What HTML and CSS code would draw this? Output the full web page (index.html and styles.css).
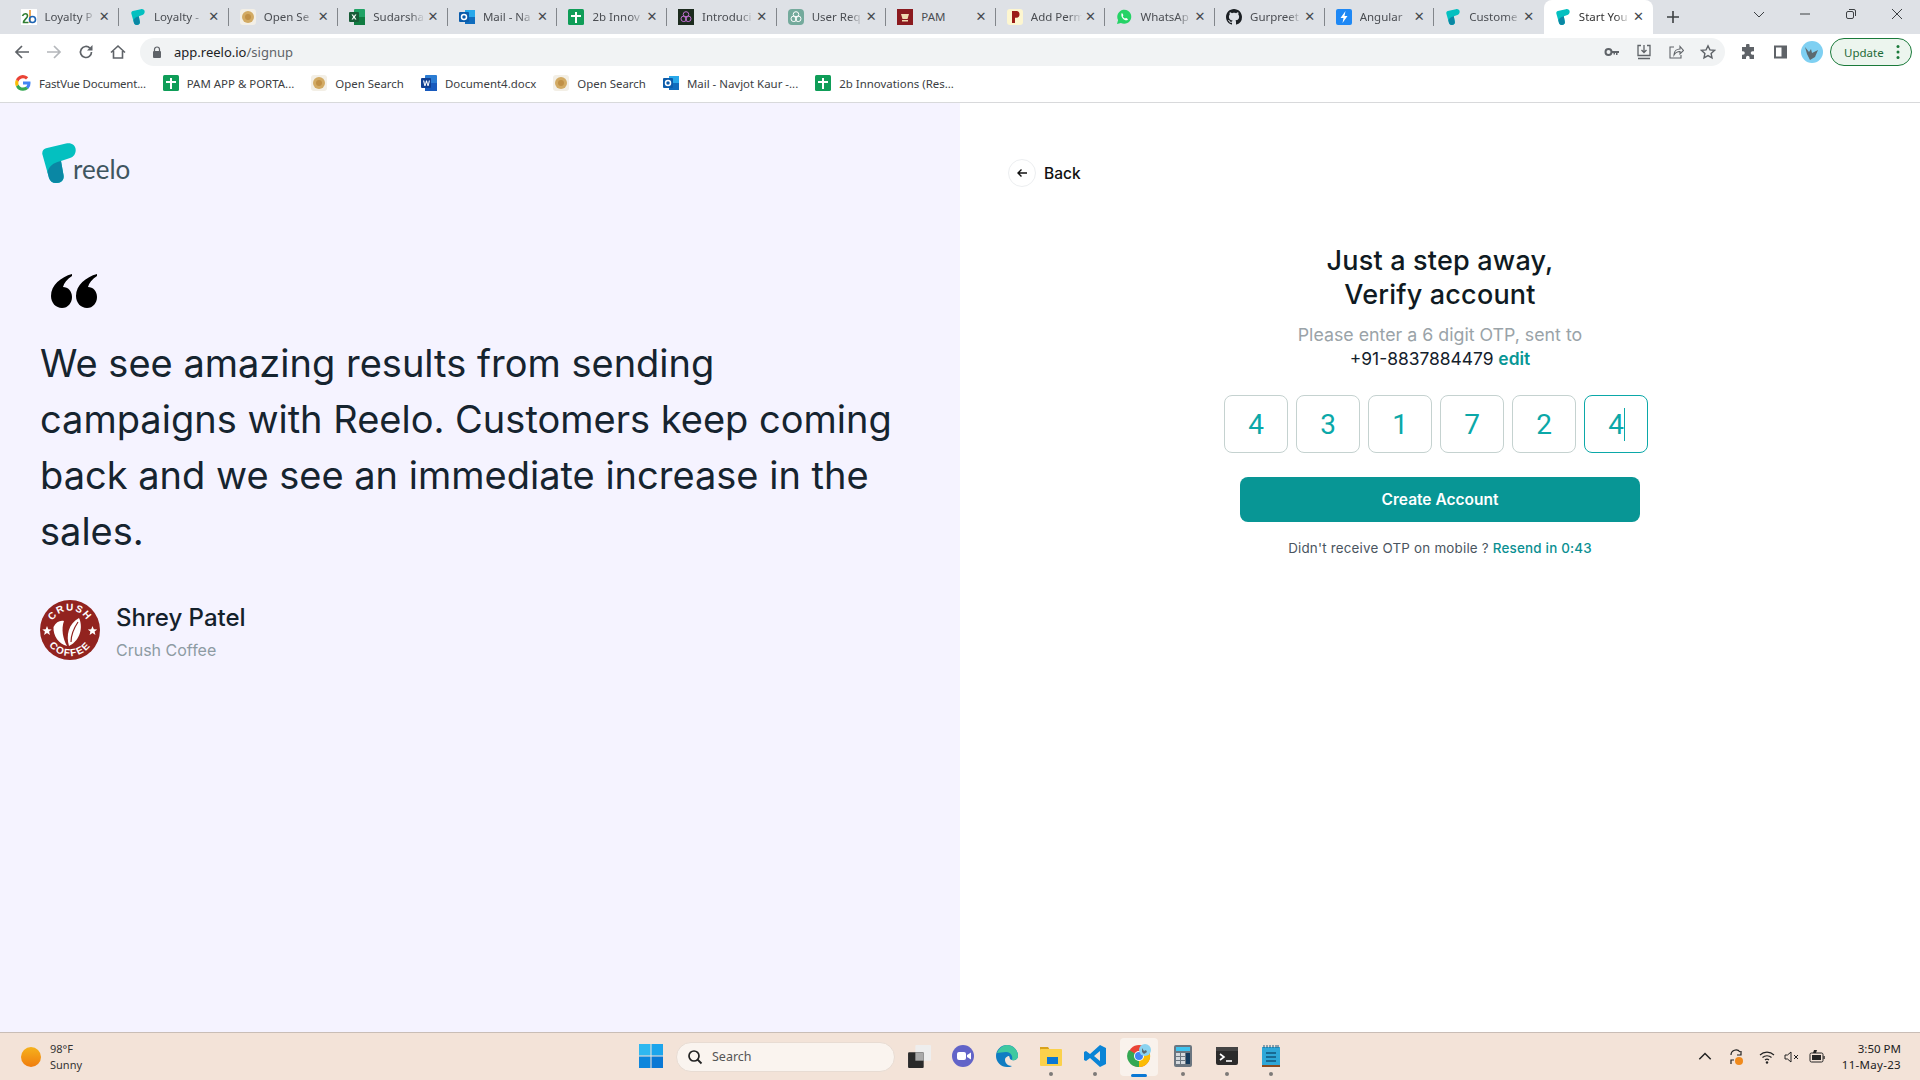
FILE: index.html
```html
<!DOCTYPE html>
<html lang="en">
<head>
<meta charset="utf-8">
<title>Start Your Free Trial</title>
<link rel="stylesheet" href="styles.css">
</head>
<body>
<svg class="defs" width="0" height="0">
  <defs>
    <symbol id="reelo" viewBox="0 0 34 40">
      <path d="M.3 11C0 8 1.500 6 4 5.200L24 .6C29-.6 33.700 2 33.700 7c0 4-2.200 7-5.700 8l-9 3 2.500 14c1 5-2.500 8-7.500 8-3.500 0-6-2-7-5z" fill="#04c0c0"/>
      <path d="M5.500 29c1-5 5.500-9.500 13.500-11l2.500 14c1 5-2.500 8-7.500 8-3.500 0-6-2-7-5z" fill="#0a87a4"/>
    </symbol>
    <symbol id="sheets" viewBox="0 0 16 16"><rect width="16" height="16" rx="1.500" fill="#0f9d58"/><path d="M7 3h2v3h4v2H9v6H7V8H3V6h4z" fill="#fff"/></symbol>
    <symbol id="coin" viewBox="0 0 16 16"><rect width="16" height="16" rx="3" fill="#f3efe6"/><circle cx="8" cy="8" r="6" fill="#d2aa63"/><circle cx="8" cy="8" r="3" fill="#c09046"/></symbol>
    <symbol id="outlook" viewBox="0 0 16 16"><rect x="6" y="1" width="10" height="14" fill="#28a8ea"/><rect x="6" y="8" width="10" height="7" fill="#0f6cbd"/><rect y="3" width="10" height="10" rx="1" fill="#0b5cab"/><circle cx="5" cy="8" r="2.500" fill="none" stroke="#fff" stroke-width="1.500"/></symbol>
    <symbol id="word" viewBox="0 0 16 16"><rect x="4" y="0" width="12" height="16" rx="1" fill="#2b7cd3"/><rect x="4" y="8" width="12" height="8" fill="#185abd"/><rect y="3" width="10" height="10" rx="1" fill="#103f91"/><path d="M2 5.500h1.200L4 9.500l1-4h1l1 4 .8-4H9L7.600 11H6.500L5.500 7.500 4.500 11H3.400z" fill="#fff"/></symbol>
    <symbol id="gpt" viewBox="0 0 16 16"><circle cx="8" cy="5.500" r="2.800" fill="none" stroke="currentColor"/><circle cx="5.800" cy="9.800" r="2.800" fill="none" stroke="currentColor"/><circle cx="10.200" cy="9.800" r="2.800" fill="none" stroke="currentColor"/></symbol>
  </defs>
</svg>

<div class="screen">
  <header class="tabstrip">
    <div class="tabs">
      <div class="tab"><svg class="fav" viewBox="0 0 16 16"><rect width="16" height="16" fill="#fff"/><path d="M1.500 7c1-3 5-3 5 0 0 2-4 4-4 6.500h5" fill="none" stroke="#2f7d32" stroke-width="1.600"/><path d="M9 1v13" stroke="#e8912d" stroke-width="1.600"/><circle cx="11.500" cy="10.500" r="3" fill="none" stroke="#1b64b5" stroke-width="1.600"/></svg><span class="tab-title">Loyalty P</span><span class="tab-close">✕</span></div>
      <div class="tab"><svg class="fav"><use href="#reelo"/></svg><span class="tab-title">Loyalty -</span><span class="tab-close">✕</span></div>
      <div class="tab"><svg class="fav"><use href="#coin"/></svg><span class="tab-title">Open Se</span><span class="tab-close">✕</span></div>
      <div class="tab"><svg class="fav" viewBox="0 0 16 16"><rect x="5" y="0" width="11" height="16" rx="1" fill="#21a366"/><rect x="5" y="8" width="11" height="8" fill="#107c41"/><rect y="3" width="10" height="10" rx="1" fill="#185c37"/><path d="M2.500 5.500h1.500l1 1.700 1-1.700h1.500L5.800 8l1.700 2.500H6L5 8.800 4 10.500H2.500L4.200 8z" fill="#fff"/></svg><span class="tab-title">Sudarsha</span><span class="tab-close">✕</span></div>
      <div class="tab"><svg class="fav"><use href="#outlook"/></svg><span class="tab-title">Mail - Na</span><span class="tab-close">✕</span></div>
      <div class="tab"><svg class="fav"><use href="#sheets"/></svg><span class="tab-title">2b Innov</span><span class="tab-close">✕</span></div>
      <div class="tab"><svg class="fav gpt-dark" viewBox="0 0 16 16"><rect width="16" height="16" fill="#1c2b1e"/><use href="#gpt" width="16" height="16"/></svg><span class="tab-title">Introduci</span><span class="tab-close">✕</span></div>
      <div class="tab"><svg class="fav gpt-light" viewBox="0 0 16 16"><rect width="16" height="16" rx="4" fill="#74aa9c"/><use href="#gpt" width="16" height="16"/></svg><span class="tab-title">User Req</span><span class="tab-close">✕</span></div>
      <div class="tab"><svg class="fav" viewBox="0 0 16 16"><rect width="16" height="16" fill="#8b1a1f"/><path d="M4 5h8l-1.500 5h-5z" fill="#f0d9b0"/><rect x="5" y="11" width="6" height="1.500" fill="#f0d9b0"/></svg><span class="tab-title tab-title-full">PAM</span><span class="tab-close">✕</span></div>
      <div class="tab"><svg class="fav" viewBox="0 0 16 16"><rect width="16" height="16" rx="3" fill="#fdf6d0"/><path d="M5 2h4.500c2 0 3 1.300 3 3.300S11.500 8.700 9.500 8.700H8V14H5z" fill="#9c1c17"/></svg><span class="tab-title">Add Perm</span><span class="tab-close">✕</span></div>
      <div class="tab"><svg class="fav" viewBox="0 0 16 16"><path d="M1 15l1.100-3.900A7 7 0 1 1 4.900 13.900z" fill="#25d366"/><path d="M5.500 4.500c1-.8 1.500 1 1.800 1.700.2.500-.6 1-.5 1.300.4 1 1.200 1.700 2.100 2.100.4.100.8-.8 1.200-.7.700.3 2.300 1 1.700 1.800-1.800 2.200-7.500-1.500-6.300-6.200z" fill="#fff"/></svg><span class="tab-title">WhatsAp</span><span class="tab-close">✕</span></div>
      <div class="tab"><svg class="fav" viewBox="0 0 16 16"><path fill="#1b1f23" d="M8 0C3.580 0 0 3.580 0 8c0 3.540 2.290 6.530 5.470 7.590.4.070.55-.17.55-.38 0-.19-.01-.82-.01-1.490-2.010.37-2.530-.49-2.690-.94-.09-.23-.48-.94-.82-1.130-.28-.15-.68-.52-.01-.53.630-.01 1.080.58 1.230.82.720 1.210 1.870.870 2.330.660.070-.520.280-.870.510-1.070-1.780-.200-3.640-.890-3.640-3.950 0-.870.310-1.590.820-2.150-.080-.200-.360-1.020.080-2.120 0 0 .670-.210 2.200.820.640-.180 1.320-.270 2-.270s1.360.090 2 .270c1.530-1.040 2.200-.820 2.200-.820.440 1.100.160 1.920.080 2.120.510.560.820 1.270.820 2.150 0 3.070-1.870 3.750-3.650 3.950.290.250.540.730.540 1.480 0 1.070-.010 1.930-.010 2.200 0 .210.150.460.550.380A8.010 8.010 0 0 0 16 8c0-4.420-3.580-8-8-8z"/></svg><span class="tab-title">Gurpreet</span><span class="tab-close">✕</span></div>
      <div class="tab"><svg class="fav" viewBox="0 0 16 16"><rect width="16" height="16" rx="2" fill="#1e88f5"/><path d="M9.500 2 4.500 9h3L6.500 14l5-7h-3z" fill="#fff"/></svg><span class="tab-title">Angular</span><span class="tab-close">✕</span></div>
      <div class="tab tab-before-active"><svg class="fav"><use href="#reelo"/></svg><span class="tab-title">Custome</span><span class="tab-close">✕</span></div>
      <div class="tab tab-active"><svg class="fav"><use href="#reelo"/></svg><span class="tab-title">Start You</span><span class="tab-close">✕</span></div>
    </div>
    <svg class="newtab" viewBox="0 0 12 12"><path d="M6 0v12M0 6h12" stroke="#3c4043" stroke-width="1.600"/></svg>
    <div class="winctrls">
      <svg class="winbtn" viewBox="0 0 12 12"><path d="M1 4l5 5 5-5" fill="none" stroke="#3c4043"/></svg>
      <svg class="winbtn" viewBox="0 0 12 12"><path d="M1 6h10" stroke="#3c4043"/></svg>
      <svg class="winbtn" viewBox="0 0 12 12"><rect x="1.500" y="3.500" width="7" height="7" rx="1.500" fill="none" stroke="#3c4043"/><path d="M4 1.500h5a1.500 1.500 0 0 1 1.500 1.500v5" fill="none" stroke="#3c4043"/></svg>
      <svg class="winbtn" viewBox="0 0 12 12"><path d="M1 1l10 10M11 1 1 11" stroke="#3c4043"/></svg>
    </div>
  </header>

  <div class="toolbar">
    <div class="navbtns">
      <svg class="tool" viewBox="0 0 16 16"><path d="M15 8H2M8 2 2 8l6 6" fill="none" stroke="#5f6368" stroke-width="1.700"/></svg>
      <svg class="tool" viewBox="0 0 16 16"><path d="M1 8h13M8 2l6 6-6 6" fill="none" stroke="#b4b7bb" stroke-width="1.700"/></svg>
      <svg class="tool" viewBox="0 0 16 16"><path d="M13.500 8a5.500 5.500 0 1 1-1.600-3.900" fill="none" stroke="#5f6368" stroke-width="1.700"/><path d="M14.500 1v5.500H9z" fill="#5f6368"/></svg>
      <svg class="tool" viewBox="0 0 16 16"><path d="M1 8.500 8 2l7 6.500M3.500 7v7h9V7" fill="none" stroke="#5f6368" stroke-width="1.600"/></svg>
    </div>
    <div class="omnibox">
      <svg class="lock" viewBox="0 0 10 12"><path d="M2.500 5V3.500a2.500 2.500 0 0 1 5 0V5" fill="none" stroke="#5f6368" stroke-width="1.200"/><rect x="1" y="5" width="8" height="7" rx="1" fill="#5f6368"/></svg>
      <span class="url">app.reelo.io<span class="url-path">/signup</span></span>
      <div class="omni-actions">
        <svg class="tool" viewBox="0 0 16 16"><circle cx="4.500" cy="8" r="3" fill="none" stroke="#5f6368" stroke-width="2"/><path d="M7 7h8v2h-1.500v2H12V9h-1v1.500H9.500V9H7z" fill="#5f6368"/></svg>
        <svg class="tool" viewBox="0 0 16 16"><path d="M5 1.500H2v10h12v-10h-3M8 1v7M5.500 6 8 8.500 10.500 6M2 14.500h12" fill="none" stroke="#5f6368" stroke-width="1.300"/></svg>
        <svg class="tool" viewBox="0 0 16 16"><path d="M6 3H2v11h11v-3M6 11c0-4 3-6 6-6V2.500L15.500 6.500 12 10V7.500C9.500 7.500 7.500 8.500 6 11z" fill="none" stroke="#5f6368" stroke-width="1.100"/></svg>
        <svg class="tool" viewBox="0 0 16 16"><path d="m8 1.800 1.900 4.100 4.500.5-3.300 3 .9 4.500L8 11.600l-4 2.300.9-4.500-3.300-3 4.500-.5z" fill="none" stroke="#5f6368" stroke-width="1.400"/></svg>
      </div>
    </div>
    <div class="ext-actions">
      <svg class="tool" viewBox="0 0 16 16"><path d="M6 1.500a1.800 1.800 0 0 1 3.600 0V3H14v4.200h-1.500a1.800 1.800 0 0 0 0 3.600H14V15H9.600v-1.500a1.800 1.800 0 0 0-3.600 0V15H2v-4.200h1a1.800 1.800 0 0 0 0-3.600H2V3h4z" fill="#5f6368"/></svg>
      <svg class="tool" viewBox="0 0 16 16"><rect x="2" y="1.500" width="13" height="13" fill="#5f6368"/><rect x="4" y="3.500" width="5.500" height="9" fill="#fff"/></svg>
      <svg class="profile" viewBox="0 0 22 22"><circle cx="11" cy="11" r="11" fill="#7fd0f2"/><path d="M4 6l4 5 2-3 1 4 6-3-3 7-5 3-3-6z" fill="#5c6a70"/></svg>
    </div>
    <div class="update"><span class="update-label">Update</span><svg class="update-dots" viewBox="0 0 4 16"><circle cx="2" cy="2.500" r="1.500"/><circle cx="2" cy="8" r="1.500"/><circle cx="2" cy="13.500" r="1.500"/></svg></div>
  </div>

  <nav class="bookmarks">
    <a class="bm"><svg class="bm-ico" viewBox="0 0 16 16"><path d="M15.500 8.200c0-.6 0-1.100-.1-1.600H8v3h4.300a3.700 3.700 0 0 1-1.600 2.400l2.500 2a7.500 7.500 0 0 0 2.300-5.800z" fill="#4285f4"/><path d="M8 15.700c2.100 0 3.800-.7 5.200-1.900l-2.500-2c-.7.500-1.600.8-2.700.8-2 0-3.800-1.400-4.400-3.200l-2.600 2A7.700 7.700 0 0 0 8 15.700z" fill="#34a853"/><path d="M3.600 9.400a4.600 4.600 0 0 1 0-3l-2.600-2a7.700 7.700 0 0 0 0 7z" fill="#fbbc05"/><path d="M8 3.300c1.200 0 2.200.4 3 1.200l2.200-2.200A7.600 7.600 0 0 0 1 4.400l2.600 2C4.200 4.600 6 3.300 8 3.300z" fill="#ea4335"/></svg><span class="bm-label bm-label-tight">FastVue Document...</span></a>
    <a class="bm"><svg class="bm-ico"><use href="#sheets"/></svg><span class="bm-label">PAM APP &amp; PORTA...</span></a>
    <a class="bm"><svg class="bm-ico"><use href="#coin"/></svg><span class="bm-label">Open Search</span></a>
    <a class="bm"><svg class="bm-ico"><use href="#word"/></svg><span class="bm-label">Document4.docx</span></a>
    <a class="bm"><svg class="bm-ico"><use href="#coin"/></svg><span class="bm-label">Open Search</span></a>
    <a class="bm"><svg class="bm-ico"><use href="#outlook"/></svg><span class="bm-label">Mail - Navjot Kaur -...</span></a>
    <a class="bm"><svg class="bm-ico"><use href="#sheets"/></svg><span class="bm-label">2b Innovations (Res...</span></a>
  </nav>

  <main class="page">
    <section class="left">
      <div class="brand">
        <svg class="brand-mark"><use href="#reelo"/></svg>
        <span class="brand-name">reelo</span>
      </div>
      <svg class="quote-mark" viewBox="0 0 46 34"><path d="M21 0C10 3 0 11 0 22c0 7 5 12 11 12s10-5 10-11-4-10-9-10c1-4 4-8 9-11zM46 0C35 3 25 11 25 22c0 7 5 12 11 12s10-5 10-11-4-10-9-10c1-4 4-8 9-11z" fill="#000"/></svg>
      <p class="quote">We see amazing results from sending campaigns with Reelo. Customers keep coming back and we see an immediate increase in the sales.</p>
      <div class="author">
        <svg class="avatar" viewBox="0 0 60 60">
          <circle cx="30" cy="30" r="30" fill="#92231f"/>
          <defs>
            <path id="arc-top" d="M10.500 30a19.500 19.500 0 0 1 39 0"/>
            <path id="arc-bot" d="M4 30a26 26 0 0 0 52 0"/>
          </defs>
          <text class="avatar-text"><textPath href="#arc-top" startOffset="50%" text-anchor="middle">CRUSH</textPath></text>
          <text class="avatar-text"><textPath href="#arc-bot" startOffset="50%" text-anchor="middle">COFFEE</textPath></text>
          <path d="M27 46C19 44 13 36 13.500 27 16 22 20 20 24 21c-3 8-1 18 3 25z" fill="#fff"/>
          <path d="M29 46c-3-10-1-22 10-28 4 8 2 22-10 28z" fill="#fff"/>
          <path d="M31 42c0-8 3-14 7-20" stroke="#92231f" stroke-width="1.200" fill="none"/>
          <path d="M7 26l1.300 3.200 3.400.2-2.600 2.200.8 3.300L7 33l-2.900 1.900.8-3.300-2.600-2.200 3.400-.2zM52.500 26l1.300 3.200 3.400.2-2.600 2.200.8 3.300-2.900-1.900-2.900 1.900.8-3.300-2.600-2.200 3.400-.2z" fill="#fff"/>
        </svg>
        <div class="author-info">
          <div class="author-name">Shrey Patel</div>
          <div class="author-org">Crush Coffee</div>
        </div>
      </div>
    </section>

    <section class="right">
      <div class="back">
        <span class="back-circle"><svg class="back-arrow" viewBox="0 0 12 12"><path d="M11 6H2M5.500 2.500 2 6l3.500 3.500" fill="none" stroke="#111" stroke-width="1.400"/></svg></span>
        <span class="back-label">Back</span>
      </div>
      <div class="form">
        <h1 class="title">Just a step away,<br>Verify account</h1>
        <p class="hint">Please enter a 6 digit OTP, sent to</p>
        <p class="phone">+91-8837884479 <span class="edit">edit</span></p>
        <div class="otp">
          <div class="digit">4</div>
          <div class="digit">3</div>
          <div class="digit">1</div>
          <div class="digit">7</div>
          <div class="digit">2</div>
          <div class="digit digit-focus">4<span class="caret"></span></div>
        </div>
        <button class="submit">Create Account</button>
        <p class="resend">Didn't receive OTP on mobile ? <span class="resend-link">Resend in 0:43</span></p>
      </div>
    </section>
  </main>

  <footer class="taskbar">
    <div class="weather">
      <span class="sun"></span>
      <div class="weather-text"><div class="temp">98°F</div><div class="cond">Sunny</div></div>
    </div>
    <div class="tb-center">
      <div class="tb-item"><svg class="tb-ico" viewBox="0 0 23 23"><rect width="11" height="11" fill="#2fb8f0"/><rect x="12" width="11" height="11" fill="#1ca5ec"/><rect y="12" width="11" height="11" fill="#0d86dc"/><rect x="12" y="12" width="11" height="11" fill="#0a78d4"/></svg></div>
      <div class="tb-search"><svg class="tb-search-ico" viewBox="0 0 16 16"><circle cx="7" cy="7" r="5" fill="none" stroke="#222" stroke-width="1.700"/><path d="m10.500 10.500 4 4" stroke="#222" stroke-width="1.800"/></svg><span class="tb-search-text">Search</span></div>
      <div class="tb-item"><svg class="tb-ico" viewBox="0 0 23 23"><rect x="8" y="1" width="15" height="15" rx="1" fill="#eee"/><rect x="1" y="8" width="15" height="15" rx="1" fill="#2a2a2a"/><rect x="8" y="8" width="8" height="8" fill="#aaa"/></svg></div>
      <div class="tb-item"><svg class="tb-ico" viewBox="0 0 24 24"><circle cx="12" cy="12" r="11" fill="#6264c8"/><rect x="6" y="8" width="9" height="8" rx="2" fill="#fff"/><path d="m16 11 4-2.500v7L16 13z" fill="#fff"/></svg></div>
      <div class="tb-item"><svg class="tb-ico" viewBox="0 0 24 24"><path d="M12 1a11 11 0 0 1 11 11c0 3-3 5-6 4-3-.7-2-3-3-4-1 0-4 1-4 4s3 6 7 6c-1 1-3 1-5 1A11 11 0 0 1 12 1z" fill="#0f7dc2"/><path d="M2 9C4 4 8 1 12 1c6 0 11 5 11 11 0 3-3 5-6 4 1-2 0-8-6-8-3 0-7 1-9 1z" fill="#3fc9a0"/></svg></div>
      <div class="tb-item tb-dot"><svg class="tb-ico" viewBox="0 0 24 24"><path d="M1 3h8l2 3H1z" fill="#d9a21b"/><rect x="1" y="5" width="22" height="17" rx="1" fill="#fbd14b"/><rect x="8" y="13" width="11" height="7" fill="#0a78d4"/></svg></div>
      <div class="tb-item tb-dot"><svg class="tb-ico" viewBox="0 0 24 24"><path d="M17 1l6 3v16l-6 3-10-9-4 3-2-1V8l2-1 4 3zM17 7l-6 5 6 5z" fill="#0a84d6"/></svg></div>
      <div class="tb-item tb-active"><span class="tb-highlight"></span><svg class="tb-ico tb-ico-top" viewBox="0 0 24 24"><circle cx="12" cy="12" r="11" fill="#ea4335"/><path d="M12 12 22 7a11 11 0 0 1-10 16z" fill="#fbbc05"/><path d="M12 12 12 23A11 11 0 0 1 2 6z" fill="#34a853"/><circle cx="12" cy="12" r="5" fill="#fff"/><circle cx="12" cy="12" r="4" fill="#4285f4"/><circle cx="18" cy="6" r="6" fill="#8ad3f0"/><path d="m15 4 2 3 2-1 1 2-3 2-2-2z" fill="#5c6a70"/></svg><span class="tb-bar"></span></div>
      <div class="tb-item tb-dot"><svg class="tb-ico" viewBox="0 0 24 24"><rect x="3" y="1" width="18" height="22" rx="2" fill="#6b7680"/><rect x="5" y="3" width="14" height="4" fill="#3fc3ee"/><path d="M5 9h4v3H5zM10 9h4v3h-4zM5 13h4v3H5zM10 13h4v3h-4zM5 17h4v3H5zM10 17h4v3h-4z" fill="#d4d9dd"/><rect x="15" y="9" width="4" height="11" fill="#143a5c"/></svg></div>
      <div class="tb-item tb-dot"><svg class="tb-ico" viewBox="0 0 24 24"><rect x="1" y="3" width="22" height="18" rx="2" fill="#2b2b2b"/><rect x="1" y="3" width="22" height="4" fill="#444"/><path d="m5 10 4 3-4 3" fill="none" stroke="#fff" stroke-width="1.600"/><path d="M11 17h6" stroke="#fff" stroke-width="1.600"/></svg></div>
      <div class="tb-item tb-dot"><svg class="tb-ico" viewBox="0 0 24 24"><rect x="3" y="3" width="18" height="18" fill="#2ea7d8"/><rect x="3" y="21" width="18" height="2" fill="#8a4a1f"/><path d="M5 1v3M8 1v3M11 1v3M14 1v3M17 1v3M19 1v3" stroke="#1e5a80"/><path d="M7 9h10M7 13h10M7 17h10" stroke="#12557c" stroke-width="1.600"/></svg></div>
    </div>
    <div class="tray">
      <svg class="tray-ico" viewBox="0 0 14 14"><path d="m2 9 5-5 5 5" fill="none" stroke="#222" stroke-width="1.300"/></svg>
      <svg class="tray-ico tray-sync" viewBox="0 0 18 18"><path d="M4 7a5 5 0 0 1 9-3M14 3v4h-4M4 16v-4h3" fill="none" stroke="#222" stroke-width="1.200"/><circle cx="12" cy="13" r="4" fill="#f08a1c"/></svg>
      <svg class="tray-ico" viewBox="0 0 16 16"><path d="M1 6a10 10 0 0 1 14 0M3.500 8.500a6.500 6.500 0 0 1 9 0M6 11a3 3 0 0 1 4 0" fill="none" stroke="#222" stroke-width="1.100"/><circle cx="8" cy="13.500" r="1.200" fill="#222"/></svg>
      <svg class="tray-ico" viewBox="0 0 16 16"><path d="M1 6h2.500L7 3v10L3.500 10H1zM10 6l4 4M14 6l-4 4" fill="none" stroke="#222"/></svg>
      <svg class="tray-ico" viewBox="0 0 16 16"><rect x="1" y="4" width="13" height="9" rx="1.500" fill="none" stroke="#222"/><rect x="3" y="6" width="9" height="5" fill="#222"/><path d="M5 1 4 4h3l1-3z" fill="#222"/><rect x="14.500" y="7" width="1.200" height="3" fill="#222"/></svg>
      <div class="clock"><div>3:50 PM</div><div class="clock-date">11-May-23</div></div>
    </div>
  </footer>
</div>
</body>
</html>
```

FILE: styles.css
```css
* { box-sizing: border-box; }
html, body { margin: 0; padding: 0; }
body { font-family: "Inter", "Liberation Sans", sans-serif; color: #111; background: #fff; }
p, h1 { margin: 0; }
.defs { position: absolute; }
.screen { width: 1920px; height: 1080px; display: flex; flex-direction: column; overflow: hidden; }

/* tab strip */
.tabstrip { height: 34px; flex: none; display: flex; align-items: stretch; background: #dee1e6; padding-left: 9.500px; font-family: "Noto Sans", "Liberation Sans", sans-serif; }
.tabs { display: flex; width: 1644px; flex: none; }
.tab { flex: 1 1 0; min-width: 0; display: flex; align-items: center; padding: 0 7px 1px 11px; position: relative; }
.tab::after { content: ""; position: absolute; right: 0; top: 8px; height: 18px; width: 1px; background: #82868b; }
.tab-before-active::after, .tab-active::after { display: none; }
.tab-active { background: #fff; border-radius: 8px 8px 0 0; }
.fav { width: 16px; height: 16px; flex: none; }
.gpt-dark { color: #c06fd0; }
.gpt-light { color: #fff; }
.tab-title { flex: 1; min-width: 0; margin-left: 8px; font-size: 11.500px; color: #4a4d52; white-space: nowrap; overflow: hidden; -webkit-mask-image: linear-gradient(to right, #000 72%, transparent); mask-image: linear-gradient(to right, #000 72%, transparent); }
.tab-title-full { -webkit-mask-image: none; mask-image: none; }
.tab-active .tab-title { color: #333; }
.tab-close { width: 16px; flex: none; text-align: center; font-size: 13px; line-height: 16px; font-weight: 700; color: #45494e; font-family: "DejaVu Sans", sans-serif; }
.newtab { width: 12px; height: 12px; margin: 11px 0 0 13.500px; flex: none; }
.winctrls { margin-left: auto; display: flex; padding-right: 17px; gap: 34px; align-items: flex-start; padding-top: 8px; }
.winbtn { width: 12px; height: 12px; flex: none; }

/* toolbar */
.toolbar { height: 34px; flex: none; display: flex; align-items: center; background: #fff; padding: 2px 0 0 14px; }
.navbtns { display: flex; gap: 16px; width: 126px; flex: none; }
.tool { width: 16px; height: 16px; flex: none; }
.omnibox { width: 1585px; height: 28px; flex: none; border-radius: 14px; background: #f1f3f4; display: flex; align-items: center; padding-left: 12px; }
.lock { width: 10px; height: 12px; flex: none; }
.url { margin-left: 12px; font-family: "Noto Sans", sans-serif; font-size: 13px; color: #202124; }
.url-path { color: #5f6368; }
.omni-actions { margin-left: auto; display: flex; gap: 16px; padding-right: 9px; }
.ext-actions { display: flex; align-items: center; gap: 16px; margin-left: 15px; flex: none; }
.profile { width: 22px; height: 22px; flex: none; margin-left: -3px; }
.update { width: 82px; height: 28px; flex: none; margin-left: 7px; border: 1px solid #1a7a3a; border-radius: 14px; background: #ecf5ee; display: flex; align-items: center; padding-left: 13px; }
.update-label { font-family: "Noto Sans", sans-serif; font-size: 11.500px; color: #1d6a36; }
.update-dots { width: 4px; height: 16px; margin-left: auto; margin-right: 11px; fill: #1a7a3a; }

/* bookmarks */
.bookmarks { height: 35px; flex: none; display: flex; align-items: center; gap: 17px; padding: 0 0 4px 15px; background: #fff; border-bottom: 1px solid #d8d9db; font-family: "Noto Sans", sans-serif; }
.bm { display: flex; align-items: center; gap: 8px; }
.bm-ico { width: 16px; height: 16px; flex: none; }
.bm-label { font-size: 11.450px; color: #3c4043; white-space: nowrap; }
.bm-label-tight { letter-spacing: -.2px; }

/* page */
.page { flex: 1; min-height: 0; display: flex; }
.left { width: 960px; flex: none; background: #f5f3ff; padding: 40px 40px 0 40px; display: flex; flex-direction: column; align-items: flex-start; }
.brand { display: flex; align-items: flex-end; height: 40px; margin-left: 2px; }
.brand-mark { width: 34px; height: 40px; flex: none; }
.brand-name { font-family: "Lato", sans-serif; font-size: 26px; line-height: 28px; color: #3f5560; margin-left: -3px; }
.quote-mark { width: 46px; height: 34px; margin: 91px 0 0 11px; flex: none; }
.quote { width: 880px; margin-top: 27px; font-size: 38px; line-height: 56px; color: #16242f; }
.author { display: flex; align-items: flex-start; margin-top: 41px; }
.avatar { width: 60px; height: 60px; flex: none; }
.avatar-text { font-family: "Liberation Sans", sans-serif; font-size: 10px; font-weight: 700; letter-spacing: 1.300px; fill: #fff; }
.author-info { margin-left: 16px; }
.author-name { font-size: 24px; line-height: 36px; font-weight: 500; color: #14212b; }
.author-org { font-size: 16px; line-height: 24px; margin-top: 2px; color: #8d9ba3; }

.right { flex: 1; background: #fff; display: flex; flex-direction: column; padding: 56px 0 0 48px; }
.back { display: flex; align-items: center; gap: 8px; }
.back-circle { width: 28px; height: 28px; border: 1px solid #eceef0; border-radius: 50%; display: flex; align-items: center; justify-content: center; }
.back-arrow { width: 12px; height: 12px; }
.back-label { font-size: 15.500px; font-weight: 500; color: #111; }
.form { width: 960px; margin-left: -48px; margin-top: 57px; display: flex; flex-direction: column; align-items: center; text-align: center; }
.title { font-size: 27px; line-height: 34px; font-weight: 500; letter-spacing: .2px; color: #0f1a22; }
.hint { margin-top: 11px; font-size: 17.800px; line-height: 24px; color: #9aa3a8; }
.phone { font-size: 17.400px; line-height: 24px; color: #14212b; }
.edit { color: #089695; font-weight: 600; }
.otp { display: flex; gap: 8px; margin: 24px 8px 0 0; }
.digit { width: 64px; height: 58px; position: relative; border: 1px solid #c5d2d0; border-radius: 8px; display: flex; align-items: center; justify-content: center; font-family: "Roboto", sans-serif; font-size: 28px; color: #0ba8a8; }
.digit-focus { border-color: #0ba8a8; }
.caret { position: absolute; left: 39px; top: 12px; width: 1px; height: 33px; background: #0ba8a8; }
.submit { width: 400px; height: 45px; margin-top: 24px; border: 0; border-radius: 8px; background: #089695; color: #fff; font-family: inherit; font-size: 15.500px; font-weight: 600; }
.resend { margin-top: 16px; font-size: 13.400px; line-height: 20px; color: #4a5560; letter-spacing: .2px; }
.resend-link { color: #0a8f92; font-weight: 500; }

/* taskbar */
.taskbar { height: 48px; flex: none; display: flex; background: #f3e3d8; border-top: 1px solid #c9bdb6; font-family: "Noto Sans", sans-serif; }
.weather { width: 629px; flex: none; display: flex; align-items: center; padding-left: 21px; }
.sun { width: 20px; height: 20px; border-radius: 50%; background: linear-gradient(#f5b21c, #f07d0e); flex: none; }
.weather-text { margin-left: 9px; font-size: 11px; line-height: 16px; color: #333; }
.tb-center { display: flex; align-items: stretch; flex: none; }
.tb-item { width: 44px; flex: none; position: relative; display: flex; align-items: center; justify-content: center; }
.tb-ico { width: 24px; height: 24px; flex: none; margin-top: -2px; }
.tb-ico-top { position: relative; }
.tb-dot::after { content: ""; position: absolute; left: 20px; bottom: 4px; width: 4px; height: 4px; border-radius: 50%; background: #7d7a78; }
.tb-highlight { position: absolute; left: 3px; top: 5px; width: 38px; height: 38px; border-radius: 4px; background: #f9f2ec; }
.tb-bar { position: absolute; left: 14px; bottom: 3px; width: 16px; height: 3px; border-radius: 2px; background: #0a78d4; }
.tb-search { width: 219px; height: 30px; align-self: center; margin: 0 2px 0 3px; flex: none; border-radius: 15px; background: #faf4ef; border: 1px solid #e8dcd3; display: flex; align-items: center; padding-left: 10px; }
.tb-search-ico { width: 16px; height: 16px; flex: none; }
.tb-search-text { margin-left: 9px; font-size: 12.500px; color: #555; }
.tray { margin-left: auto; display: flex; align-items: center; padding-right: 19px; }
.tray-ico { width: 16px; height: 16px; flex: none; margin-right: 9px; }
.tray-sync { width: 18px; height: 18px; margin: 0 14px 0 5px; }
.clock { margin-left: 5px; text-align: right; font-size: 11.500px; line-height: 16px; color: #222; width: 62px; }
.clock-date { letter-spacing: .3px; }
```
